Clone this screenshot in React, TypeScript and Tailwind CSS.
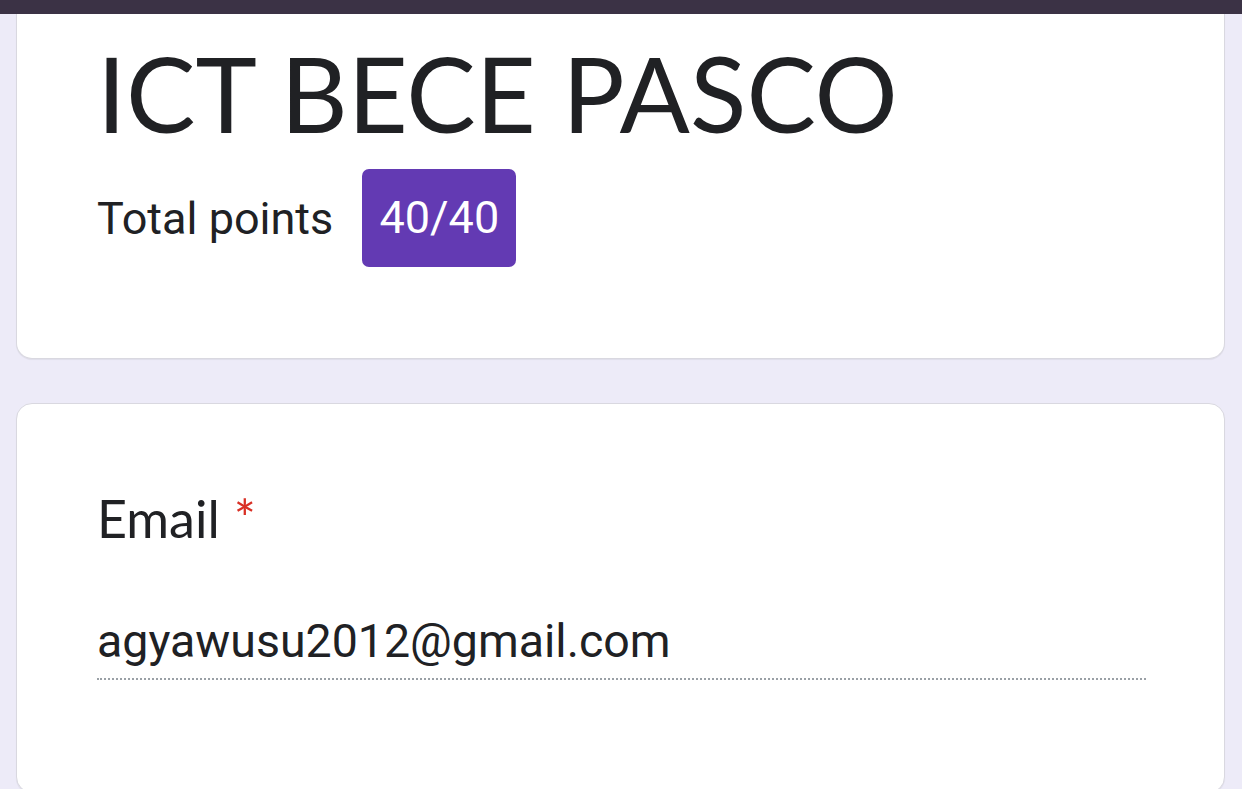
import React from "react"

const App = () => {
  return (
    <div className="h-[789px] w-[1242px] overflow-hidden bg-[#edebf8] font-['Roboto',sans-serif]">
      <div className="h-[14px] bg-[#3b3245]" />

      <div className="flex flex-col gap-[44px] pl-[16px] pr-[17px]">
        {/* header card */}
        <div className="h-[345px] rounded-b-[16px] border border-t-0 border-[#d9d8e0] bg-white pl-[80px] shadow-[0_1px_1px_rgba(0,0,0,0.06)]">
          <h1 className="mt-[14px] font-['Lato',sans-serif] text-[104px] leading-[130px] font-normal text-[#202124]">
            ICT BECE PASCO
          </h1>
          <div className="mt-[11px] flex items-center gap-[29px]">
            <span className="text-[45px] leading-none text-[#202124]">Total points</span>
            <span className="flex h-[98px] w-[154px] items-center justify-center rounded-[7px] bg-[#633ab3] text-[45px] text-white">
              40/40
            </span>
          </div>
        </div>

        {/* email card */}
        <div className="h-[390px] shrink-0 rounded-[16px] border border-[#d9d8e0] bg-white pl-[80px] pr-[78px] shadow-[0_1px_1px_rgba(0,0,0,0.06)]">
          <div className="mt-[84px] flex items-start font-['Lato',sans-serif] text-[52px] leading-[60px] text-[#202124]">
            Email
            <span className="ml-[14px] text-[#d93025]">*</span>
          </div>
          <div className="mt-[63px] border-b-2 border-dotted border-[#9aa0a6] pb-[7px] text-[46.5px] leading-[60px] text-[#202124]">
            agyawusu2012@gmail.com
          </div>
        </div>
      </div>
    </div>
  )
}

export default App
